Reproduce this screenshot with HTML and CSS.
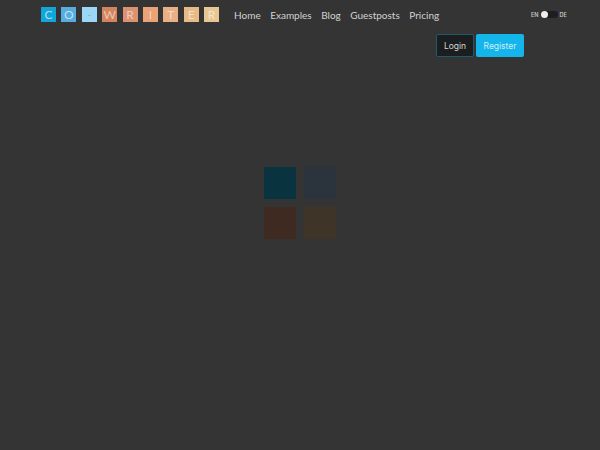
FILE: index.html
```html
<!DOCTYPE html>
<html lang="en">
<head>
<meta charset="utf-8">
<title>Co-Writer</title>
<link rel="stylesheet" href="styles.css">
</head>
<body>
<header class="topbar">
  <div class="logo">
    <span class="tile t1">C</span><span class="tile t2">O</span><span class="tile t3">-</span><span class="tile t4">W</span><span class="tile t5">R</span><span class="tile t6">I</span><span class="tile t7">T</span><span class="tile t8">E</span><span class="tile t9">R</span>
  </div>
  <nav class="nav">
    <a>Home</a><a>Examples</a><a>Blog</a><a>Guestposts</a><a>Pricing</a>
  </nav>
  <div class="lang">
    <span>EN</span>
    <span class="switch"><span class="knob"></span></span>
    <span>DE</span>
  </div>
</header>
<div class="actions">
  <button class="btn login">Login</button>
  <button class="btn register">Register</button>
</div>
<div class="loader">
  <span class="sq a"></span><span class="sq b"></span><span class="sq c"></span><span class="sq d"></span>
</div>
</body>
</html>
```
FILE: styles.css
```css
html, body { margin: 0; height: 100%; }
body {
  background: #343434;
  font-family: "Lato", "Liberation Sans", sans-serif;
  overflow: hidden;
}
.topbar {
  display: flex;
  align-items: center;
  height: 29px;
  padding-left: 41px;
}
.logo { display: flex; gap: 5.4px; width: 193px; flex: none; }
.tile {
  width: 15px;
  height: 15px;
  display: flex;
  align-items: center;
  justify-content: center;
  font-size: 12px;
  line-height: 1;
  color: rgba(255,255,255,.55);
}
.t1 { background: #12a5d8; color: rgba(255,255,255,.65); }
.t2 { background: #56ade0; color: rgba(255,255,255,.65); }
.t3 { background: #9bd6f7; color: #7fb9da; }
.t4 { background: #d4835c; }
.t5 { background: #dc9270; }
.t6 { background: #e9a377; }
.t7 { background: #ebaf86; }
.t8 { background: #e8bb86; }
.t9 { background: #e9c792; }
.nav {
  display: flex;
  gap: 9.5px;
  width: 204px;
  flex: none;
  font-size: 10px;
  color: #d2d2d2;
}
.lang {
  display: flex;
  align-items: center;
  font-family: "Inter", sans-serif;
  font-size: 5.5px;
  font-weight: 600;
  color: #c4c4c4;
  margin-left: 93px;
  gap: 2px;
}
.switch {
  position: relative;
  width: 17px;
  height: 7px;
  border-radius: 4px;
  background: #1e1e1e;
  display: block;
}
.knob {
  position: absolute;
  left: 0;
  top: 0;
  width: 7px;
  height: 7px;
  border-radius: 50%;
  background: #eeeeee;
}
.actions {
  display: flex;
  justify-content: flex-end;
  gap: 2px;
  margin-top: 5px;
  padding-right: 76px;
}
.btn {
  height: 23px;
  padding: 0;
  border-radius: 2px;
  font-family: "Inter", sans-serif;
  font-size: 8.5px;
}
.login { width: 38px; background: #1b1d1e; border: 1px solid #1d5a6e; color: #d6d6d6; }
.register { width: 48px; background: #13b5ea; border: 0; color: #cfeefa; }
.loader {
  position: absolute;
  left: 264px;
  top: 167px;
  display: grid;
  grid-template-columns: 32px 32px;
  grid-auto-rows: 32px;
  gap: 8px;
}
.sq { display: block; }
.a { background: #0a3340; }
.b { background: #2b343c; }
.c { background: #3f2a22; }
.d { background: #3e3427; }
```
